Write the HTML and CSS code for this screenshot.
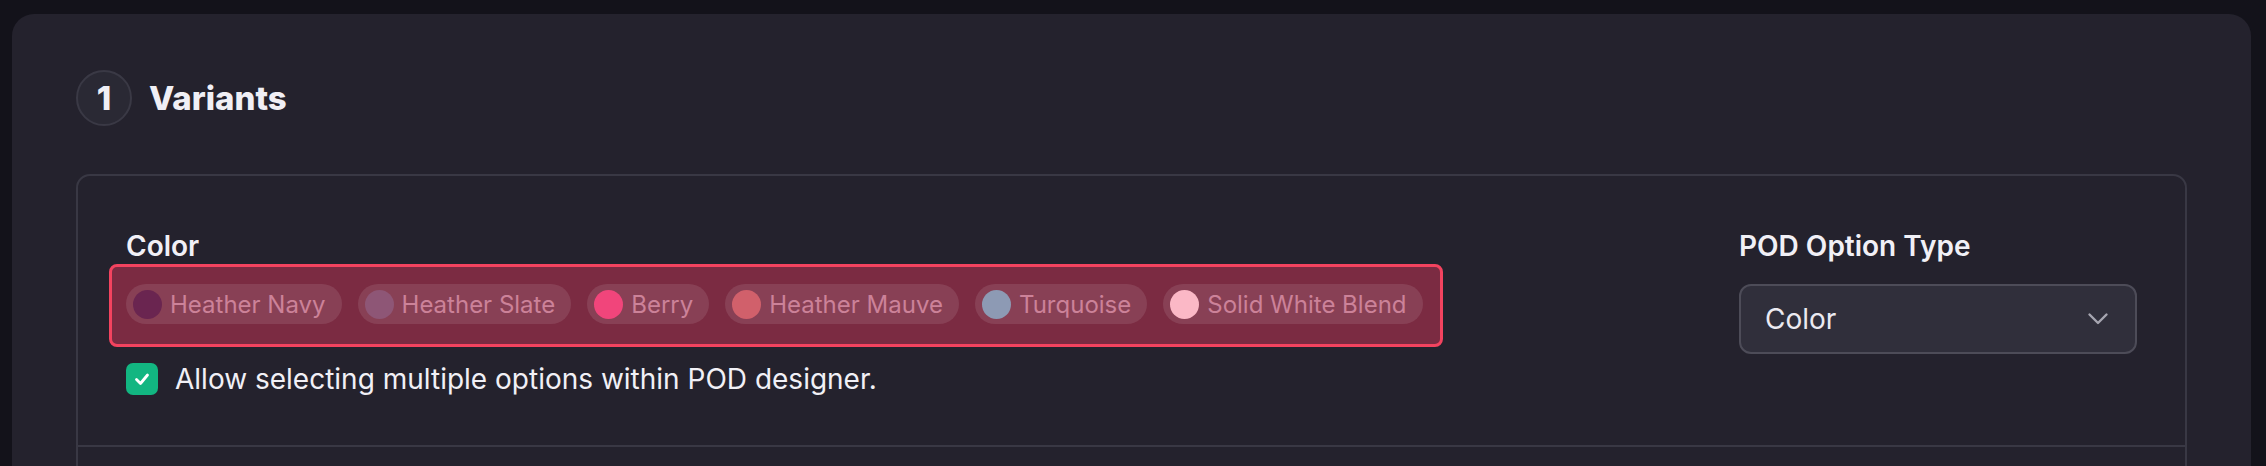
FILE: index.html
```html
<!DOCTYPE html>
<html lang="en">
<head>
<meta charset="utf-8">
<title>Variants</title>
<link rel="stylesheet" href="styles.css">
</head>
<body>
<div class="card">
  <div class="step-header">
    <div class="step-num">1</div>
    <h2 class="step-title">Variants</h2>
  </div>
  <div class="panel">
    <div class="option-row">
      <div class="option-main">
        <div class="field-label">Color</div>
        <div class="swatch-box">
          <span class="chip"><span class="dot dot-navy"></span>Heather Navy</span>
          <span class="chip"><span class="dot dot-slate"></span>Heather Slate</span>
          <span class="chip"><span class="dot dot-berry"></span>Berry</span>
          <span class="chip"><span class="dot dot-mauve"></span>Heather Mauve</span>
          <span class="chip"><span class="dot dot-turq"></span>Turquoise</span>
          <span class="chip"><span class="dot dot-white"></span>Solid White Blend</span>
        </div>
        <label class="check-row">
          <span class="checkbox">
            <svg viewBox="0 0 20 20" width="20" height="20"><polyline points="4.5,10.5 8.5,14.5 15.5,6" fill="none" stroke="#ffffff" stroke-width="2.8" stroke-linecap="round" stroke-linejoin="round"/></svg>
          </span>
          <span class="check-text">Allow selecting multiple options within POD designer.</span>
        </label>
      </div>
      <div class="option-side">
        <div class="field-label">POD Option Type</div>
        <div class="select">
          <span class="select-value">Color</span>
          <svg class="chevron" viewBox="0 0 22 14" width="22" height="14"><polyline points="2.5,2.5 11,11 19.5,2.5" fill="none" stroke="#a6a5b0" stroke-width="2.4" stroke-linecap="round" stroke-linejoin="round"/></svg>
        </div>
      </div>
    </div>
    <div class="option-row empty"></div>
  </div>
</div>
</body>
</html>
```

FILE: styles.css
```css
html, body {
  margin: 0;
  padding: 0;
}
body {
  background: #13121a;
  font-family: Inter, "Noto Sans", "Liberation Sans", sans-serif;
  color: #f1f0f6;
  height: 466px;
  overflow: hidden;
  padding: 14px 15px 0 12px;
  box-sizing: border-box;
}
.card {
  background: #24222d;
  border-radius: 22px;
  padding: 56px 64px 0 64px;
  min-height: 700px;
  box-sizing: border-box;
}
.step-header {
  display: flex;
  align-items: center;
  gap: 17px;
}
.step-num {
  width: 56px;
  height: 56px;
  box-sizing: border-box;
  border: 2px solid #3a3945;
  background: #2a2934;
  border-radius: 50%;
  display: flex;
  align-items: center;
  justify-content: center;
  font-size: 33px;
  font-weight: 800;
  color: #f0eff5;
}
.step-title {
  margin: 0;
  font-size: 33px;
  font-weight: 800;
  color: #f0eff5;
  line-height: 40px;
}
.panel {
  margin-top: 48px;
  border: 2px solid #393844;
  border-radius: 14px;
  min-height: 600px;
}
.option-row {
  display: grid;
  grid-template-columns: 1fr 398px;
  gap: 40px;
  padding: 52px 48px 48px 48px;
  border-bottom: 2px solid #393844;
}
.option-row.empty {
  border-bottom: none;
  min-height: 100px;
}
.field-label {
  font-size: 28px;
  line-height: 36px;
  font-weight: 600;
  color: #f1f0f6;
  margin-bottom: 20px;
}
.swatch-box {
  display: inline-flex;
  flex-wrap: wrap;
  gap: 16px;
  margin: -20px 0 0 -17px;
  padding: 17px 17px 20px 14px;
  border: 3px solid #f3435f;
  border-radius: 8px;
  background: #7b2b42;
}
.chip {
  display: inline-flex;
  align-items: center;
  gap: 8px;
  height: 40px;
  padding: 0 16px 0 7px;
  border-radius: 20px;
  background: rgba(255, 255, 255, 0.1);
  font-size: 24px;
  color: #cc8299;
  white-space: nowrap;
}
.dot {
  width: 29px;
  height: 29px;
  border-radius: 50%;
  flex: none;
}
.dot-navy { background: #6a2550; }
.dot-slate { background: #8e5676; }
.dot-berry { background: #f1457b; }
.dot-mauve { background: #d1606b; }
.dot-turq { background: #8d9ab4; }
.dot-white { background: #fbb8c6; }
.check-row {
  display: flex;
  align-items: center;
  gap: 17px;
  margin-top: 14px;
}
.checkbox {
  width: 32px;
  height: 32px;
  border-radius: 7px;
  background: #12b681;
  display: flex;
  align-items: center;
  justify-content: center;
  flex: none;
}
.check-text {
  font-size: 28px;
  line-height: 36px;
  color: #f1f0f6;
}
.select {
  height: 70px;
  box-sizing: border-box;
  border: 2px solid #4d4c58;
  border-radius: 12px;
  background: #302f3b;
  display: flex;
  align-items: center;
  justify-content: space-between;
  padding: 0 26px 0 24px;
}
.select-value {
  font-size: 28px;
  color: #ebeaf1;
}
.chevron {
  flex: none;
}
```
